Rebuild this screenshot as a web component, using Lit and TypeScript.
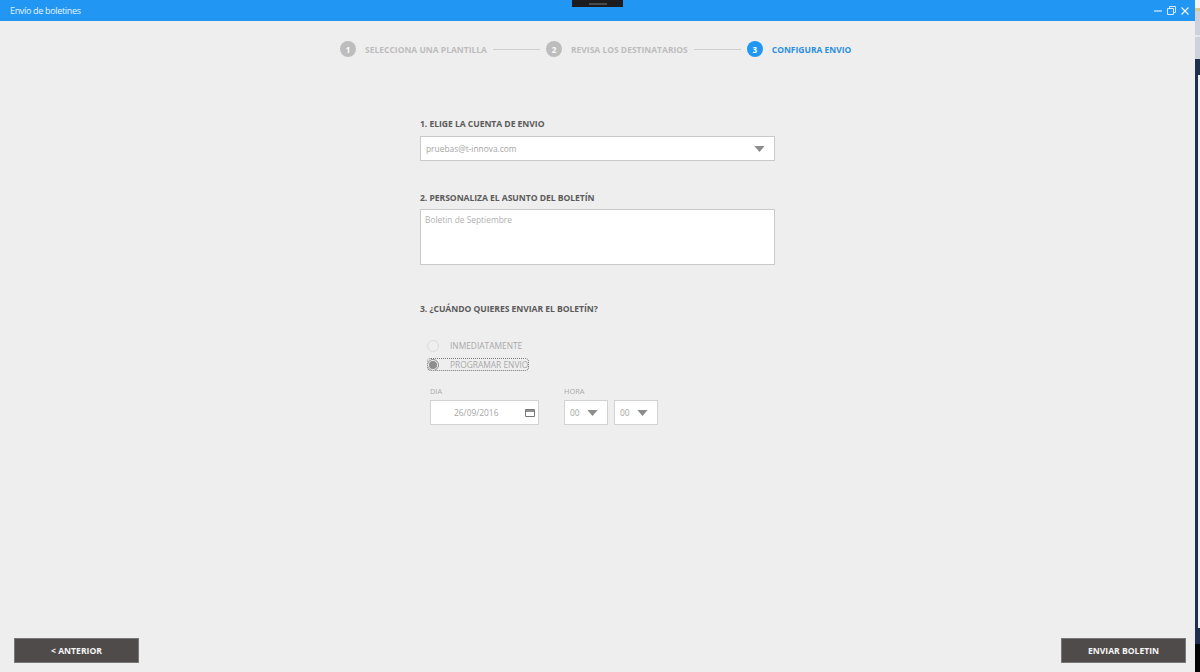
import { LitElement, html, css, unsafeCSS } from "lit";
import { customElement } from "lit/decorators.js";

const FONT = unsafeCSS(`"Open Sans", "Noto Sans", "Liberation Sans", sans-serif`);

const caret = (w: number, h: number) => html`<svg class="caret" width=${w} height=${h} viewBox="0 0 12 7"><path d="M0 0H12L6 7Z" fill="#8c8c8c"/></svg>`;

@customElement("app-root")
export class AppRoot extends LitElement {
  static styles = css`
    :host { display: flex; width: 1200px; height: 672px; overflow: hidden; background: #eeeeee; font-family: ${FONT}; }
    .win { width: 1195px; height: 672px; flex: none; display: flex; flex-direction: column; }
    .titlebar { height: 21px; flex: none; background: #2196f3; display: flex; align-items: center; padding: 0 6px 0 10px; color: #e8f4fe; font-size: 9px; letter-spacing: -0.33px; position: relative; }
    .notch { position: absolute; top: 0; left: 572px; width: 51px; height: 7px; background: #1c1c1f; display: flex; justify-content: center; align-items: center; }
    .notch i { display: block; width: 18px; height: 2px; background: #4a4a4a; }
    .ctl { margin-left: auto; display: flex; gap: 5px; align-items: center; }
    .steps { display: flex; align-items: center; height: 16px; margin: 20px 0 0 340px; font-size: 8.5px; font-weight: 700; color: #bdbdbd; line-height: 15px; }
    .num { width: 16px; height: 16px; border-radius: 50%; background: #bdbdbd; color: #fff; font-size: 8px; display: flex; align-items: center; justify-content: center; margin-right: 9px; }
    .step { display: flex; align-items: center; white-space: nowrap; }
    .step.on { color: #2b8fe0; }
    .step.on .num { background: #2196f3; }
    .line { height: 1px; background: #cfcfcf; width: 47px; margin: 0 6px; }
    .form { margin: 61px 0 0 420px; width: 355px; display: flex; flex-direction: column; }
    .head { font-size: 8.6px; font-weight: 700; color: #5b5b5b; line-height: 12px; letter-spacing: -0.05px; white-space: nowrap; }
    .box { background: #fff; border: 1px solid #c9c9c9; box-sizing: border-box; color: #a5a5a5; font-size: 8.4px; display: flex; align-items: center; }
    .select { height: 25px; margin-top: 6px; padding: 0 9px 0 5px; justify-content: space-between; }
    .area { height: 56px; margin-top: 5px; padding: 4px; align-items: flex-start; color: #b0b0b0; }
    .h2 { margin-top: 31px; }
    .h3 { margin-top: 38px; }
    .radios { margin: 24px 0 0 7px; display: flex; flex-direction: column; gap: 6px; color: #a9a9a9; font-size: 8.4px; }
    .radio { display: flex; align-items: center; height: 13px; width: 102px; white-space: nowrap; overflow: hidden; box-sizing: border-box; }
    .radio.focus { border: 1px dotted #777; border-radius: 4px; }
    .dot { width: 12px; height: 12px; border-radius: 50%; border: 1px solid #dcdcdc; box-sizing: border-box; margin-right: 11px; flex: none; display: flex; align-items: center; justify-content: center; }
    .dot.sel { border-color: #8e8e8e; margin-left: -1px; }
    .dot.sel::after { content: ""; width: 8px; height: 8px; border-radius: 50%; background: #8e8e8e; }
    .when { display: flex; margin: 16px 0 0 10px; }
    .field { display: flex; flex-direction: column; }
    .mini { font-size: 7.4px; color: #aaa; line-height: 9px; margin-bottom: 4px; }
    .date { width: 109px; height: 25px; padding: 0 3px 0 23px; justify-content: space-between; border-color: #d2d2d2; }
    .hora { margin-left: 25px; }
    .times { display: flex; gap: 6px; }
    .time { width: 44px; height: 25px; padding: 0 9px 0 5px; justify-content: space-between; border-color: #d2d2d2; }
    .spacer { flex: 1; }
    .actions { display: flex; justify-content: space-between; padding: 0 9px 9px 14px; }
    .btn { width: 125px; height: 25px; box-sizing: border-box; background: #4f4b4a; border: 1px solid #e6e6e6; outline: 1px solid #777; outline-offset: -1px; color: #f5f5f5; font: 700 8.6px ${FONT}; display: flex; align-items: center; justify-content: center; }
    .side { flex: 1; display: flex; flex-direction: column; height: 672px; }
    .side-top { height: 59px; flex: none; background: linear-gradient(#f4f4f4 0 8px, #d9c98a 8px 11px, #cdd2da 11px 35px, #e4e6ea 35px 37px, #cdd2da 37px); }
    .side-mid { flex: 1; background: #1f2f4e; display: flex; justify-content: flex-end; padding-top: 16px; }
    .side-mid i { display: block; width: 2px; background: #eef1f5; }
    .side-label { height: 16px; flex: none; background: #1f2f4e; }
    .side-end { height: 28px; flex: none; background: #050505; }
  `;

  render() {
    return html`
      <div class="win">
        <div class="titlebar">
          <span>Envío de boletines</span>
          <div class="notch"><i></i></div>
          <div class="ctl">
            <svg width="8" height="8" viewBox="0 0 8 8"><path d="M0 4H8" stroke="#d7ecfd" stroke-width="1.2"/></svg>
            <svg width="9" height="9" viewBox="0 0 9 9" fill="none" stroke="#d7ecfd"><path d="M.5 2.5H6.5V8.5H.5ZM2.5 2.5V.5H8.5V6.5H6.5"/></svg>
            <svg width="8" height="8" viewBox="0 0 8 8"><path d="M.5.5L7.5 7.5M7.5.5L.5 7.5" stroke="#eef7fe" stroke-width="1.2"/></svg>
          </div>
        </div>
        <div class="steps">
          <div class="step"><span class="num">1</span>SELECCIONA UNA PLANTILLA</div>
          <div class="line"></div>
          <div class="step"><span class="num">2</span>REVISA LOS DESTINATARIOS</div>
          <div class="line"></div>
          <div class="step on"><span class="num">3</span>CONFIGURA ENVIO</div>
        </div>
        <div class="form">
          <div class="head">1. ELIGE LA CUENTA DE ENVIO</div>
          <div class="box select"><span>pruebas@t-innova.com</span>${caret(11, 6)}</div>
          <div class="head h2">2. PERSONALIZA EL ASUNTO DEL BOLETÍN</div>
          <div class="box area">Boletin de Septiembre</div>
          <div class="head h3">3. ¿CUÁNDO QUIERES ENVIAR EL BOLETÍN?</div>
          <div class="radios">
            <div class="radio"><span class="dot"></span>INMEDIATAMENTE</div>
            <div class="radio focus"><span class="dot sel"></span><span>PROGRAMAR ENVIO</span></div>
          </div>
          <div class="when">
            <div class="field">
              <span class="mini">DIA</span>
              <div class="box date"><span>26/09/2016</span>
                <svg width="10" height="10" viewBox="0 0 10 10" fill="none" stroke="#777"><path d="M.5 1.5H9.5V8.5H.5Z"/><path d="M.5 3H9.5" stroke-width="1.6"/></svg>
              </div>
            </div>
            <div class="field hora">
              <span class="mini">HORA</span>
              <div class="times">
                <div class="box time"><span>00</span>${caret(11, 6)}</div>
                <div class="box time"><span>00</span>${caret(11, 6)}</div>
              </div>
            </div>
          </div>
        </div>
        <div class="spacer"></div>
        <div class="actions">
          <div class="btn">&lt; ANTERIOR</div>
          <div class="btn">ENVIAR BOLETIN</div>
        </div>
      </div>
      <div class="side">
        <div class="side-top"></div>
        <div class="side-mid"><i></i></div>
        <div class="side-label"></div>
        <div class="side-end"></div>
      </div>
    `;
  }
}
